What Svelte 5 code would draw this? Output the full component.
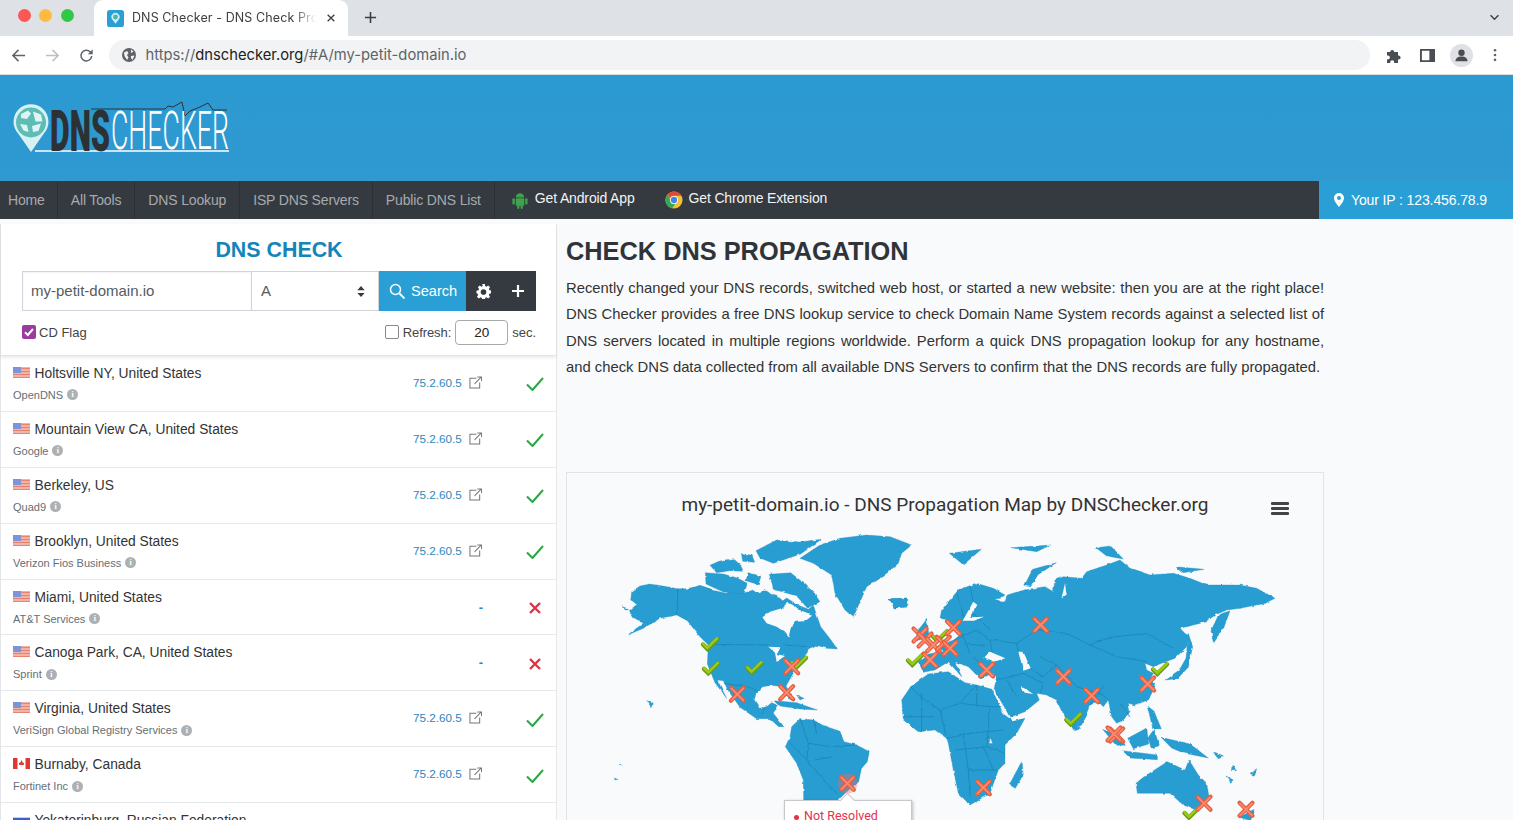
<script>
  const nav = ['Home', 'All Tools', 'DNS Lookup', 'ISP DNS Servers', 'Public DNS List'];
  const rows = [
    { c: 'us', t: 'Holtsville NY, United States', s: 'OpenDNS', ok: true },
    { c: 'us', t: 'Mountain View CA, United States', s: 'Google', ok: true },
    { c: 'us', t: 'Berkeley, US', s: 'Quad9', ok: true },
    { c: 'us', t: 'Brooklyn, United States', s: 'Verizon Fios Business', ok: true },
    { c: 'us', t: 'Miami, United States', s: 'AT&T Services', ok: false },
    { c: 'us', t: 'Canoga Park, CA, United States', s: 'Sprint', ok: false },
    { c: 'us', t: 'Virginia, United States', s: 'VeriSign Global Registry Services', ok: true },
    { c: 'ca', t: 'Burnaby, Canada', s: 'Fortinet Inc', ok: true },
    { c: 'ru', t: 'Yekaterinburg, Russian Federation', s: 'Skydns', ok: false }
  ];
  const z7 = (x, y) => [600 + x / 3, 530 + y / 3];
  const z8 = (x, y) => [890 + x / 3, 530 + y / 3];
  const checks = [
    z7(330, 342), z7(333, 415), z7(463, 413), z7(597, 398),
    z8(150, 318), z8(75, 390), z8(810, 417), z8(550, 568), z8(905, 848)
  ];
  const crosses = [
    z7(575, 410), z7(412, 493), z7(560, 488), z7(742, 760),
    z8(190, 293), z8(120, 390), z8(90, 315), z8(105, 330), z8(130, 345), z8(160, 340), z8(180, 355),
    z8(452, 285), z8(290, 420), z8(520, 440), z8(605, 497), z8(773, 462), z8(680, 615), z8(672, 612),
    z8(280, 773), z8(942, 820), z8(1068, 838)
  ];
  const land7 = [
    'M95,185 L120,168 L150,162 L190,168 L232,176 L262,176 L300,166 L318,172 L345,182 L378,190 L395,184 L430,190 L460,180 L478,192 L492,178 L510,190 L530,196 L548,212 L560,204 L592,224 L625,238 L640,226 L648,250 L662,290 L690,326 L712,357 L680,355 L650,346 L626,356 L610,386 L590,412 L575,438 L558,468 L582,512 L566,506 L548,470 L515,466 L488,470 L468,490 L463,510 L478,535 L500,530 L515,518 L532,525 L520,550 L540,575 L552,590 L536,590 L510,566 L470,566 L420,532 L385,482 L370,452 L352,450 L380,505 L345,458 L322,402 L325,345 L300,320 L262,272 L230,255 L180,265 L130,295 L83,315 L130,280 L100,262 L88,242 L112,222 L92,210 Z',
    'M575,590 L600,566 L640,570 L680,590 L720,604 L732,635 L770,645 L808,665 L802,695 L784,716 L776,755 L740,785 L715,810 L690,870 L612,870 L610,750 L590,700 L556,650 L570,620 Z',
    'M600,85 L660,45 L720,25 L800,15 L870,20 L935,45 L905,70 L895,100 L860,130 L800,170 L760,262 L735,240 L705,190 L695,135 L640,100 Z',
    'M330,106 L360,92 L400,86 L422,105 L430,124 L388,122 L350,128 Z', 'M468,62 L530,30 L600,36 L664,28 L602,72 L520,100 L480,84 Z',
    'M424,70 L456,76 L464,97 L428,94 Z', 'M316,128 L370,132 L412,144 L442,160 L432,192 L370,186 L318,162 Z',
    'M444,128 L482,138 L476,164 L438,152 Z', 'M508,133 L572,128 L612,160 L642,188 L660,215 L622,234 L590,198 L520,178 Z',
    'M865,208 L922,203 L924,226 L885,234 Z', 'M525,512 L590,518 L652,540 L600,537 L540,528 Z',
    'M590,495 L612,505 L600,510 Z', 'M142,512 L160,522 L152,530 Z', 'M66,230 L86,236 L74,238 Z', 'M58,702 L72,708 L62,708 Z', 'M44,744 L52,748 L44,750 Z'
  ];
  const water7 = [
    'M487,262 L510,245 L545,235 L562,218 L578,224 L592,238 L625,250 L640,254 L620,270 L588,272 L572,295 L566,322 L553,305 L530,290 L500,280 Z',
    'M505,350 L540,352 L530,372 L555,378 L530,395 L525,368 Z'
  ];
  const land8 = [
    'M100,427 L85,395 L115,372 L160,365 L150,345 L192,330 L215,310 L185,292 L175,270 L150,265 L155,240 L205,180 L260,160 L310,175 L345,195 L325,210 L345,215 L352,195 L400,180 L465,170 L490,185 L495,150 L520,140 L575,145 L590,125 L650,105 L690,90 L720,115 L780,135 L850,130 L900,145 L950,165 L1050,165 L1100,175 L1155,205 L1125,220 L1050,235 L1010,240 L975,255 L950,275 L870,295 L895,320 L890,350 L855,385 L815,400 L790,410 L765,400 L770,420 L790,430 L782,445 L795,470 L775,510 L735,525 L715,520 L720,545 L700,570 L680,580 L665,560 L655,510 L640,530 L625,515 L600,525 L575,585 L548,600 L525,560 L500,510 L470,495 L440,490 L448,510 L405,545 L360,562 L345,535 L312,478 L318,450 L310,430 L270,445 L235,410 L195,395 L215,440 L175,395 L135,420 Z',
    'M35,510 L62,470 L115,432 L175,425 L225,458 L260,465 L306,478 L340,552 L370,574 L405,565 L380,610 L345,645 L345,700 L325,720 L300,790 L240,825 L205,790 L190,720 L175,640 L170,625 L135,600 L85,605 L40,570 Z',
    'M738,760 L760,742 L790,722 L832,695 L885,720 L897,690 L925,735 L950,760 L957,800 L925,842 L880,825 L840,790 L742,790 Z',
    'M1002,248 L1020,243 L1002,292 L970,337 L963,302 L985,256 Z', 'M825,450 L868,420 L888,385 L895,310 L908,350 L895,412 L862,446 Z',
    'M638,598 L692,622 L706,646 L678,646 Z', 'M698,662 L802,675 L802,689 L720,684 Z', 'M713,625 L770,594 L776,642 L730,656 Z',
    'M772,528 L792,543 L814,597 L788,594 Z', 'M773,625 L792,598 L808,647 L785,654 Z', 'M813,622 L900,642 L955,684 L880,669 L845,654 Z', 'M358,764 L396,693 L400,734 L376,775 Z',
    'M178,70 L274,58 L220,104 Z', 'M403,167 L428,118 L499,98 L444,134 L422,170 Z', 'M618,53 L662,48 L700,87 L650,78 Z',
    'M85,300 L110,268 L118,322 L78,332 Z', 'M363,53 L482,45 L440,65 Z', 'M858,110 L942,118 L880,128 Z', 'M1048,862 L1092,838 L1082,872 Z',
    'M0,205 L52,206 L50,232 L12,234 Z', 'M554,582 L572,598 L554,602 Z',
    'M1008,738 L1030,750 L1022,757 Z', 'M1026,706 L1040,722 L1024,722 Z', 'M1080,730 L1100,716 L1094,737 Z', 'M970,668 L1000,680 L985,686 Z'
  ];
  const water8 = [
    'M280,385 L300,365 L346,385 L310,396 Z', 'M385,365 L400,365 L422,415 L400,422 Z', 'M218,272 L250,215 L262,225 L240,262 L282,260 L252,272 Z',
    'M392,468 L430,492 L404,488 Z', 'M315,207 L345,205 L340,216 Z', 'M515,205 L525,160 L530,195 Z', 'M300,628 L308,640 L298,640 Z'
  ];
  const borders8 = 'M192,330 L260,300 L300,330 L380,340 L440,300 L530,310 L600,345 L680,380 L770,395 M600,345 L660,322 L770,310 L850,355 M450,380 L500,405 L560,470 L640,495 L660,510 M380,340 L385,365 M320,450 L400,430 L460,460 L450,490 M420,415 L460,440 L500,405 M62,470 L90,500 L150,540 L210,520 L260,465 M150,540 L170,625 M210,520 L300,530 L340,530 M170,625 L240,610 L340,600 M195,660 L290,650 L345,670 M235,720 L320,720 M235,720 L240,800 M260,465 L260,530 M95,490 L95,600 M215,310 L240,370 M250,250 L300,300 M200,190 L225,270 M240,165 L250,215 M300,330 L310,385 M230,340 L290,350 M380,500 L350,450 M40,560 L130,560 M600,525 L640,470 M690,520 L720,560 M280,650 L310,720 M220,610 L235,720 M300,530 L290,650 M250,380 L270,400';
  const borders7 = 'M233,176 L233,255 M325,343 L505,345 M370,460 L440,470 L470,480 M600,566 L625,640 L690,650 L770,645 M625,640 L620,690 L680,760 L710,790 M570,640 L620,690 M640,690 L700,680 M550,345 L620,350 M640,570 L650,610 M500,530 L480,560';
</script>

<div class="page">
  <div class="tabs">
    <div class="lights"><i class="red"></i><i class="amber"></i><i class="green"></i></div>
    <div class="tab">
      <svg class="fav" viewBox="0 0 18 18"><rect width="18" height="18" rx="3" fill="#2a9fd6"/><path d="M9 14.5 5.6 10a4.3 4.3 0 1 1 6.8 0Z" fill="#cdeef2"/><circle cx="9" cy="7.4" r="2.6" fill="#4fb3a8"/></svg>
      <span class="tab-title">DNS Checker - DNS Check Propagation</span>
      <svg class="tab-x" viewBox="0 0 12 12"><path d="M2 2l8 8M10 2l-8 8" stroke="#3c4043" stroke-width="1.6"/></svg>
    </div>
    <svg class="newtab" viewBox="0 0 14 14"><path d="M7 1v12M1 7h12" stroke="#3c4043" stroke-width="1.7"/></svg>
    <svg class="chev" viewBox="0 0 12 8"><path d="M1.5 1.5 6 6l4.5-4.5" fill="none" stroke="#3c4043" stroke-width="1.6"/></svg>
  </div>

  <div class="toolbar">
    <svg class="tb back" viewBox="0 0 16 16"><path d="M15 8H2M8 2 2 8l6 6" fill="none" stroke="#5f6368" stroke-width="1.6"/></svg>
    <svg class="tb fwd" viewBox="0 0 16 16"><path d="M1 8h13M8 2l6 6-6 6" fill="none" stroke="#bcc0c4" stroke-width="1.6"/></svg>
    <svg class="tb reload" viewBox="0 0 16 16"><path d="M13.5 8.5A5.7 5.7 0 1 1 11.8 4L14 6" fill="none" stroke="#5f6368" stroke-width="1.6"/><path d="M14.6 1.4v5.2H9.4Z" fill="#5f6368"/></svg>
    <div class="omni">
      <svg class="globe" viewBox="0 0 14 14"><circle cx="7" cy="7" r="7" fill="#5f6368"/><path d="M2 4.5 5 3l1.5 2L5 7l1.5 2.5L5 12 2.5 8ZM9 1.5l2.5 2L9 5ZM9 8l3.5-.5L10.5 12 9 10Z" fill="#f1f3f4"/></svg>
      <span class="url">https://<b>dnschecker.org</b>/#A/my-petit-domain.io</span>
    </div>
    <svg class="puzzle" viewBox="0 0 16 16"><path d="M1 5h3.2a2 2 0 1 1 4 0H12v3.6a2 2 0 1 1 0 3.8V16H8a2 2 0 1 0-3.6 0H1v-3.8a2 2 0 1 0 0-3.6Z" fill="#4a4e52"/></svg>
    <svg class="side" viewBox="0 0 16 16"><path fill-rule="evenodd" d="M0 1h16v14H0ZM2 3v10h8V3Z" fill="#4a4e52"/></svg>
    <div class="avatar"><svg viewBox="0 0 16 16"><circle cx="8" cy="5" r="3.4" fill="#4a4e52"/><path d="M1.5 14c.4-3.6 3-5 6.500-5s6.100 1.400 6.500 5Z" fill="#4a4e52"/></svg></div>
    <svg class="dots" viewBox="0 0 4 16"><circle cx="2" cy="2.500" r="1.500" fill="#5f6368"/><circle cx="2" cy="8" r="1.500" fill="#5f6368"/><circle cx="2" cy="13.500" r="1.500" fill="#5f6368"/></svg>
  </div>

  <header class="hero">
    <svg class="logo" viewBox="0 0 240 60" aria-label="DNS Checker">
      <path d="M18 47 5.500 29a17.500 17.500 0 1 1 25 0Z" fill="#d8f2f3"/>
      <circle cx="18" cy="17.500" r="15" fill="#5dbdb5"/>
      <path d="M8 9l7-3.500 3 3-4 5.500-6-1ZM20 6.500l8 3 1.500 7-7 0ZM7 19l7 1 1.500 7-5-1.500ZM19 21l9-2.500-2.500 7.500-5.500 1Z" fill="#dff5f4"/>
      <path d="M22 46H216" stroke="#fff" stroke-width="1.500"/>
      <path d="M78 4H152L155 1 160 2 169 -3 172 11 177 6 187 2 195 -2 200 5H214" fill="none" stroke="#2f3338" stroke-width="1"/>
      <text x="37" y="46" class="dns" textLength="60" lengthAdjust="spacingAndGlyphs">DNS</text>
      <text x="98" y="44" class="chk" textLength="118" lengthAdjust="spacingAndGlyphs">CHECKER</text>
    </svg>
  </header>

  <nav class="nav">
    {#each nav as n}<a class="item">{n}</a>{/each}
    <a class="promo android">
      <svg viewBox="0 0 16 18"><rect x="3.500" y="6.500" width="9" height="8" rx="1" fill="#3fa34d"/><path d="M3.500 5.800a4.500 4.500 0 0 1 9 0Z" fill="#3fa34d"/><rect x="0" y="6.500" width="2.500" height="7" rx="1.200" fill="#3fa34d"/><rect x="13.500" y="6.500" width="2.500" height="7" rx="1.200" fill="#3fa34d"/><rect x="5" y="13" width="2.300" height="5" rx="1.100" fill="#3fa34d"/><rect x="8.700" y="13" width="2.300" height="5" rx="1.100" fill="#3fa34d"/></svg>
      <span>Get Android App</span>
    </a>
    <a class="promo chrome">
      <svg viewBox="0 0 20 20"><circle cx="10" cy="10" r="9.500" fill="#f2c230"/><path d="M10 .5a9.500 9.500 0 0 1 8.300 4.800H10a4.800 4.800 0 0 0-4.500 3L2.600 4A9.500 9.500 0 0 1 10 .5Z" fill="#dd4b39"/><path d="M2.600 4l4 7.200a4.800 4.800 0 0 0 4.500 3.500L8 19.300A9.500 9.500 0 0 1 2.600 4Z" fill="#3aa757"/><circle cx="10" cy="10" r="4.400" fill="#fff"/><circle cx="10" cy="10" r="3.500" fill="#3f86e8"/></svg>
      <span>Get Chrome Extension</span>
    </a>
    <div class="ip">
      <svg viewBox="0 0 10 14"><path d="M5 0a5 5 0 0 0-5 5c0 3.500 5 9 5 9s5-5.500 5-9a5 5 0 0 0-5-5Zm0 7a2 2 0 1 1 0-4 2 2 0 0 1 0 4Z" fill="#fff"/></svg>
      Your IP : 123.456.78.9
    </div>
  </nav>

  <main class="main">
    <aside class="left">
      <section class="form">
        <h2>DNS CHECK</h2>
        <div class="controls">
          <div class="domain">my-petit-domain.io</div>
          <div class="rtype">A<svg viewBox="0 0 8 12"><path d="M4 0 8 4.500H0ZM4 12 0 7.500h8Z" fill="#343a40"/></svg></div>
          <div class="search">
            <svg viewBox="0 0 16 16"><circle cx="6.500" cy="6.500" r="5" fill="none" stroke="#fff" stroke-width="1.500"/><path d="m10.500 10.500 5 5" stroke="#fff" stroke-width="1.800"/></svg>
            Search
          </div>
          <div class="extras">
            <svg class="gear" viewBox="0 0 16 16"><path fill-rule="evenodd" d="M6.600 0h2.800l.4 2.200 1.300.6L13 1.500l2 2-1.300 1.900.6 1.300 2.200.4v2.800l-2.200.4-.6 1.300 1.300 1.900-2 2-1.900-1.300-1.300.6-.4 2.200H6.600l-.4-2.200-1.300-.6L3 15.500l-2-2 1.300-1.900-.6-1.300L.5 9.900V7.100l2.200-.4.600-1.300L2 3.500l2-2 1.900 1.300 1.300-.6ZM8 5.500a3 3 0 1 0 0 6 3 3 0 0 0 0-6Z" fill="#fff"/></svg>
            <svg class="plus" viewBox="0 0 12 12"><path d="M6 0v12M0 6h12" stroke="#fff" stroke-width="2.200"/></svg>
          </div>
        </div>
        <div class="options">
          <span class="cb on"><svg viewBox="0 0 14 14"><path d="m3 7.200 2.800 2.800L11 4" fill="none" stroke="#fff" stroke-width="2"/></svg></span>
          <span class="cd">CD Flag</span>
          <span class="cb off"></span>
          <span class="rf">Refresh:</span>
          <span class="secs">20</span>
          <span class="sec">sec.</span>
        </div>
      </section>

      {#each rows as r}
        <div class="row">
          <div class="where">
            <div class="place">
              <svg class="flag" viewBox="0 0 17 11">
                {#if r.c === 'us'}
                  <rect width="17" height="11" fill="#f5c3b9"/>
                  <path d="M0 1.500h17M0 4.500h17M0 7.500h17M0 10.300h17" stroke="#e8836f" stroke-width="1.300"/>
                  <rect width="8" height="6" fill="#7f94d6"/>
                {:else if r.c === 'ca'}
                  <rect width="17" height="11" fill="#fff"/>
                  <rect width="4.500" height="11" fill="#dc3a32"/><rect x="12.500" width="4.500" height="11" fill="#dc3a32"/>
                  <path d="M8.500 2 10 5l1.200-.5-.5 2.500H6.300l-.5-2.500L7 5Z" fill="#dc3a32"/>
                {:else}
                  <rect width="17" height="11" fill="#fff"/><rect y="3.700" width="17" height="3.700" fill="#3c5fd0"/><rect y="7.400" width="17" height="3.600" fill="#d63a32"/>
                {/if}
              </svg>
              {r.t}
            </div>
            <div class="prov">{r.s}<i class="info">i</i></div>
          </div>
          {#if r.ok}
            <a class="addr">75.2.60.5</a>
            <svg class="ext" viewBox="0 0 14 14"><path d="M8 2.500H1v10.500h10.500V7" fill="none" stroke="#777" stroke-width="1.100"/><path d="M6 8.500 13 1.300M9 1h4.500v4.500" fill="none" stroke="#777" stroke-width="1.100"/></svg>
            <svg class="state" viewBox="0 0 18 14"><path d="M1 7.500 6.500 13 17 1" fill="none" stroke="#28a745" stroke-width="2"/></svg>
          {:else}
            <span class="dash">-</span>
            <svg class="state x" viewBox="0 0 12 12"><path d="m1 1 10 10M11 1 1 11" stroke="#dc3545" stroke-width="2.400"/></svg>
          {/if}
        </div>
      {/each}
    </aside>

    <section class="right">
      <h1>CHECK DNS PROPAGATION</h1>
      <div class="intro">
        <span>Recently changed your DNS records, switched web host, or started a new website: then you are at the right place!</span>
        <span>DNS Checker provides a free DNS lookup service to check Domain Name System records against a selected list of</span>
        <span>DNS servers located in multiple regions worldwide. Perform a quick DNS propagation lookup for any hostname,</span>
        <span class="last">and check DNS data collected from all available DNS Servers to confirm that the DNS records are fully propagated.</span>
      </div>

      <div class="card">
        <div class="card-head">
          <div class="map-title">my-petit-domain.io - DNS Propagation Map by DNSChecker.org</div>
          <div class="burger"><i></i><i></i><i></i></div>
        </div>
        <svg class="map" viewBox="600 530 700 290">
          <defs>
            <filter id="coast" x="600" y="530" width="700" height="290" filterUnits="userSpaceOnUse" color-interpolation-filters="sRGB">
              <feTurbulence type="fractalNoise" baseFrequency="0.16" numOctaves="2" seed="4" result="n"/>
              <feDisplacementMap in="SourceGraphic" in2="n" scale="2.800" xChannelSelector="R" yChannelSelector="G"/>
              <feGaussianBlur stdDeviation="0.35"/>
            </filter>
            <g id="mk-x"><path d="m-6.500-6.500 13 13M6.500-6.500l-13 13" stroke="#e4603f" stroke-width="4.200" stroke-linecap="round"/><path d="m-6-6 12 12M6-6-6 6" stroke="#fb8a72" stroke-width="1.800" stroke-linecap="round"/></g>
            <g id="mk-c"><path d="m-7 .5 4.300 4.300L7-4.800" fill="none" stroke="#6c9a10" stroke-width="4.400" stroke-linecap="round"/><path d="m-7-.3 4.300 4.300L7-5.500" fill="none" stroke="#97cb18" stroke-width="2.600" stroke-linecap="round"/></g>
          </defs>
          <g filter="url(#coast)">
            <g transform="translate(600 530) scale(.33333)">
              {#each land7 as d}<path {d} class="land"/>{/each}
              <path d={borders7} class="border"/>
              {#each water7 as d}<path {d} class="water"/>{/each}
            </g>
            <g transform="translate(890 530) scale(.33333)">
              {#each land8 as d}<path {d} class="land"/>{/each}
              <path d={borders8} class="border"/>
              {#each water8 as d}<path {d} class="water"/>{/each}
            </g>
          </g>
          <circle cx="847.500" cy="783.500" r="10" fill="#f0686a" opacity=".4"/>
          {#each checks as p}<use href="#mk-c" x={p[0]} y={p[1]}/>{/each}
          {#each crosses as p}<use href="#mk-x" x={p[0]} y={p[1]}/>{/each}
        </svg>
        <div class="tip"><i></i><span>Not Resolved</span></div>
      </div>
    </section>
  </main>
</div>

<style>
  :global(body) { margin: 0; overflow: hidden; background: #f8fafb; }
  .page { width: 1513px; height: 820px; overflow: hidden; font-family: "Liberation Sans", Arial, sans-serif; color: #333; background: #f8fafb; }
  svg { display: block; flex: none; }

  .tabs { height: 36px; background: #dee1e6; display: flex; align-items: flex-end; position: relative; }
  .lights { display: flex; gap: 8.500px; padding: 0 0 14.500px 17.500px; width: 94px; box-sizing: border-box; flex: none; }
  .lights i { width: 13px; height: 13px; border-radius: 50%; flex: none; }
  .red { background: #fc5753; } .amber { background: #fdbc40; } .green { background: #33c748; }
  .tab { width: 254px; height: 36px; background: #fff; border-radius: 9px 9px 0 0; display: flex; align-items: center; padding-left: 13px; box-sizing: border-box; flex: none; }
  .fav { width: 17px; height: 17px; }
  .tab-title { margin-left: 8px; width: 184px; font: 12.500px/1 Inter, "Liberation Sans", sans-serif; color: #3c4043; white-space: nowrap; overflow: hidden; -webkit-mask-image: linear-gradient(90deg, #000 88%, transparent); mask-image: linear-gradient(90deg, #000 88%, transparent); letter-spacing: .1px; }
  .tab-x { width: 10px; height: 10px; margin-left: 10px; }
  .newtab { width: 13px; height: 13px; margin: 0 0 12px 16px; }
  .chev { width: 11px; height: 7px; margin: 0 13px 15px auto; }

  .toolbar { height: 38px; background: #fff; border-bottom: 1px solid #dadce0; display: flex; align-items: center; }
  .tb { width: 15px; height: 15px; }
  .back { margin-left: 11px; }
  .fwd { margin-left: 19px; }
  .reload { margin-left: 19px; }
  .omni { margin-left: 15px; width: 1261px; height: 30px; background: #f1f3f4; border-radius: 15px; display: flex; align-items: center; padding-left: 13px; box-sizing: border-box; }
  .globe { width: 14px; height: 14px; }
  .url { margin: 1px 0 0 9.500px; font: 14.750px/1 Inter, "Liberation Sans", sans-serif; color: #5f6368; white-space: nowrap; }
  .url b { font-weight: 400; color: #202124; }
  .puzzle { width: 16px; height: 16px; margin-left: 16px; }
  .side { width: 15px; height: 15px; margin-left: 18px; }
  .avatar { width: 23px; height: 23px; border-radius: 50%; background: #dfe1e5; margin-left: 15px; display: flex; align-items: center; justify-content: center; }
  .avatar svg { width: 15px; height: 15px; }
  .dots { width: 4px; height: 14px; margin-left: 20px; }

  .hero { height: 106px; background: linear-gradient(#2b9ad2, #2f99d0); box-sizing: border-box; padding: 30px 0 0 13px; }
  .logo { width: 240px; height: 60px; overflow: visible; }
  .dns { font: 900 58px/1 Roboto, "Liberation Sans", sans-serif; fill: #2c3136; }
  .chk { font: 300 54px/1 Roboto, "Liberation Sans", sans-serif; fill: #fff; }

  .nav { height: 38px; background: #353a41; display: flex; align-items: stretch; font-size: 14px; }
  .item { display: flex; align-items: center; padding: 0 13px; color: #a7aaad; border-right: 1px solid #2c3036; letter-spacing: -.15px; white-space: nowrap; }
  .item:first-child { padding-left: 8px; padding-right: 12px; }
  .promo { display: flex; align-items: center; color: #f2f3f4; white-space: nowrap; letter-spacing: -.15px; }
  .promo span { margin-top: -4px; }
  .android { margin-left: 17px; gap: 7px; }
  .android svg { width: 16px; height: 17px; }
  .chrome { margin-left: 30px; gap: 6px; }
  .chrome svg { width: 18px; height: 18px; }
  .ip { margin-left: auto; width: 194px; background: #2a9fd6; color: #fff; display: flex; align-items: center; gap: 7px; padding-left: 15px; box-sizing: border-box; letter-spacing: -.12px; }
  .ip svg { width: 10px; height: 14px; }

  .main { display: flex; align-items: flex-start; padding-top: 5px; }
  .left { width: 557px; background: #fff; border-left: 1px solid #e3e6e8; border-right: 1px solid #e6e8ea; box-sizing: border-box; flex: none; }
  .form { height: 132px; box-sizing: border-box; padding: 15px 20px 0 21px; border-bottom: 1px solid #e3e5e7; box-shadow: 0 2px 3px rgba(0, 0, 0, .08); position: relative; }
  h2 { margin: 0; font-size: 21.400px; line-height: 22px; text-align: center; color: #1484bb; font-weight: 700; }
  .controls { display: flex; height: 40px; margin-top: 10px; }
  .domain { width: 230px; flex: none; box-sizing: border-box; border: 1px solid #ced4da; display: flex; align-items: center; padding: 0 0 2px 8px; font-size: 15px; color: #555b61; box-shadow: inset 0 1px 2px rgba(0,0,0,.05); }
  .rtype { width: 127px; flex: none; box-sizing: border-box; border: 1px solid #ced4da; border-left: 0; display: flex; align-items: center; justify-content: space-between; padding: 0 13px 2px 9px; font-size: 15px; color: #555b61; }
  .rtype svg { width: 8px; height: 11px; margin-top: 2px; }
  .search { width: 87px; flex: none; background: #2a9fd6; color: #fff; display: flex; align-items: center; gap: 6px; padding: 0 0 1px 10px; box-sizing: border-box; font-size: 14.600px; }
  .search svg { width: 16px; height: 16px; margin-top: 1px; }
  .extras { width: 70px; flex: none; background: #353a41; display: flex; align-items: center; padding-left: 10px; box-sizing: border-box; }
  .gear { width: 15px; height: 15px; }
  .plus { width: 12px; height: 12px; margin-left: 21px; }
  .options { display: flex; align-items: center; height: 26px; margin-top: 8px; font-size: 13px; color: #444; }
  .cb { width: 14px; height: 14px; box-sizing: border-box; border-radius: 2px; flex: none; }
  .cb.on { background: #9b3a9f; }
  .cb.off { border: 1px solid #8a8a8a; margin-left: auto; background: #fff; }
  .cd { margin-left: 3px; }
  .rf { margin-left: 4px; letter-spacing: -.1px; }
  .secs { width: 53px; height: 25px; margin-left: 4px; border: 1px solid #a9a9a9; border-radius: 4px; box-sizing: border-box; display: flex; align-items: center; justify-content: center; color: #222; font-size: 13.500px; }
  .sec { margin-left: 4px; }

  .row { height: 55.900px; box-sizing: border-box; border-bottom: 1px solid #e6e9eb; display: flex; align-items: center; padding-left: 12px; }
  .where { width: 400px; flex: none; }
  .place { display: flex; align-items: center; gap: 4.500px; font-size: 13.800px; color: #333; }
  .flag { width: 17px; height: 11px; margin-top: -2px; }
  .prov { display: flex; align-items: center; gap: 4px; margin-top: 8px; font-size: 11px; color: #666e75; }
  .info { width: 11px; height: 11px; border-radius: 50%; background: #adb1b4; color: #fff; font: 700 8px/11px "Liberation Serif", serif; text-align: center; }
  .addr { font-size: 11.700px; color: #2d86bd; width: 56px; flex: none; margin-top: -2px; }
  .ext { width: 13px; height: 13px; margin-top: -2px; }
  .dash { font-size: 13px; font-weight: 700; color: #2d86bd; margin-left: 26px; width: 44px; flex: none; text-align: right; }
  .state { width: 18px; height: 14px; margin-left: 44px; margin-top: 2px; }
  .state.x { width: 12px; height: 12px; margin-left: 46px; }

  .right { margin-left: 9px; width: 758px; flex: none; }
  h1 { margin: 12px 0 0; font-size: 25.350px; line-height: 30px; font-weight: 700; color: #303438; white-space: nowrap; }
  .intro { margin-top: 9px; font-size: 14.800px; line-height: 26.400px; color: #333; height: 197px; }
  .intro span { display: block; width: 758px; text-align: justify; text-align-last: justify; white-space: nowrap; }
  .intro .last { text-align-last: left; }
  .card { height: 400px; border: 1px solid #e1e4e6; background: #f8fafc; position: relative; box-sizing: border-box; padding-left: 33px; }
  .card-head { height: 57px; position: relative; margin-left: -33px; }
  .map-title { padding-top: 20px; text-align: center; font: 19px/24px Roboto, "Liberation Sans", sans-serif; color: #333; }
  .burger { position: absolute; left: 704px; top: 29px; display: grid; gap: 2px; width: 18px; }
  .burger i { height: 3px; background: #444; border-radius: 1px; }
  .map { width: 700px; height: 290px; }
  .land { fill: #279dd1; stroke: #1e8bbd; stroke-width: 1; stroke-linejoin: round; }
  .water { fill: #f8fafc; }
  .border { fill: none; stroke: #1d84b6; stroke-width: 2.500; }
  .tip { position: absolute; left: 217px; top: 327px; width: 128px; height: 50px; background: #fff; border: 1px solid #c5c7c9; box-shadow: 1px 1px 3px rgba(0,0,0,.25); box-sizing: border-box; display: flex; align-items: flex-start; padding: 7px 0 0 9px; gap: 5px; font: 12.500px/16px Roboto, "Liberation Sans", sans-serif; color: #e5324a; }
  .tip i { width: 5px; height: 5px; border-radius: 50%; background: #e5324a; margin-top: 7px; flex: none; }
  .tip::before { content: ""; position: absolute; left: 57px; top: -6px; width: 10px; height: 10px; background: #fff; transform: rotate(45deg); border-left: 1px solid #c5c7c9; border-top: 1px solid #c5c7c9; }
</style>
